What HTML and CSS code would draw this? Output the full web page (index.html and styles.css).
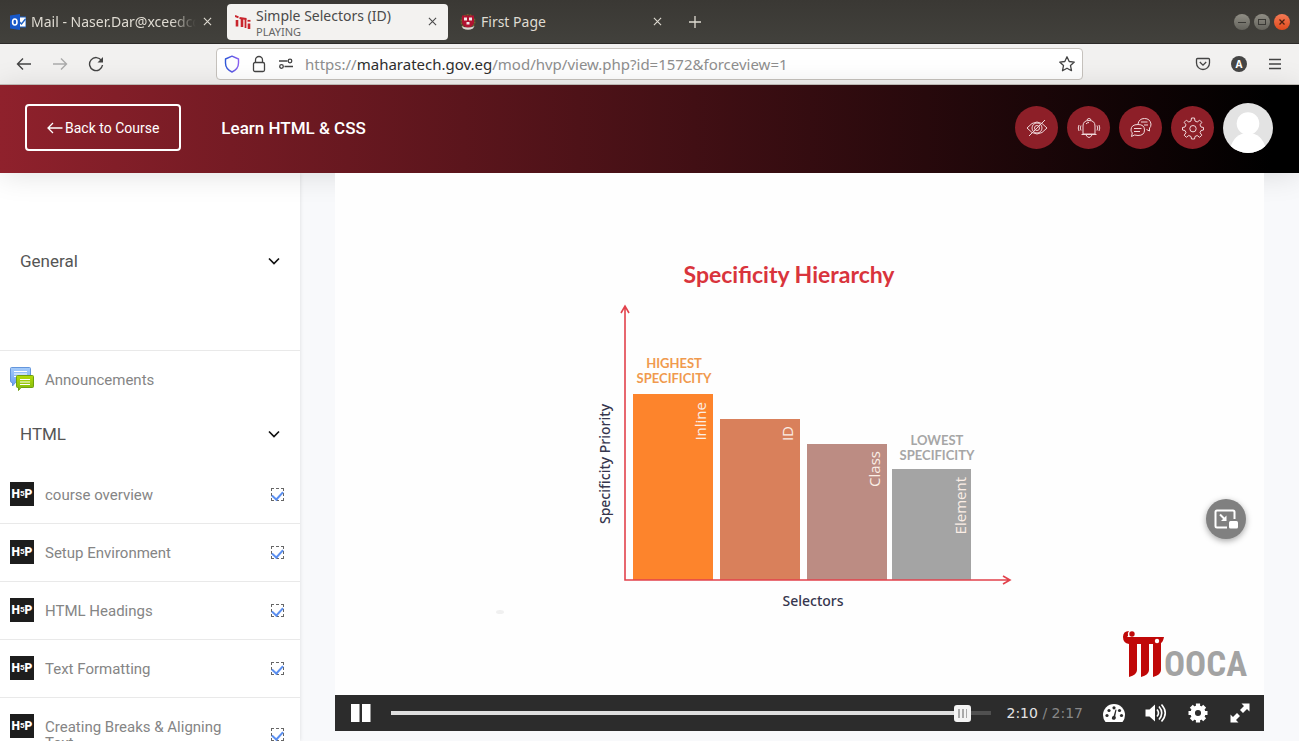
FILE: index.html
```html
<!DOCTYPE html>
<html lang="en">
<head>
<meta charset="utf-8">
<meta name="viewport" content="width=device-width, initial-scale=1">
<title>Simple Selectors (ID)</title>
<link rel="stylesheet" href="styles.css">
</head>
<body>
<svg class="defs" aria-hidden="true">
  <symbol id="close" viewBox="0 0 10 10"><path d="M1 1l8 8M9 1L1 9" fill="none" stroke="currentColor" stroke-width="1.2"/></symbol>
  <symbol id="chevron" viewBox="0 0 12 8"><path d="M1 1.500l5 5 5-5" fill="none" stroke="currentColor" stroke-width="1.700"/></symbol>
</svg>

<header class="titlebar">
  <nav class="tabs" aria-label="Tabs">
    <div class="tab">
      <svg class="favicon" viewBox="0 0 16 16"><rect x="9" y="3" width="7" height="10" fill="#fff" stroke="#1c60c4"/><path d="M9.500 8l2 2 4-5" fill="none" stroke="#1c60c4" stroke-width="1.500"/><path d="M0 1.500L10 0v16L0 14.500z" fill="#1858c8"/><ellipse cx="4.800" cy="8" rx="2.200" ry="3" fill="none" stroke="#fff" stroke-width="1.600"/></svg>
      <span class="tab-title fade">Mail - Naser.Dar@xceedcc</span>
      <button class="tab-close" aria-label="Close tab"><svg><use href="#close"/></svg></button>
    </div>
    <div class="tab active">
      <svg class="favicon" viewBox="0 0 16 16" fill="none" stroke="#c9252d"><path d="M2 6v6.500M7 4.500v8.500M14 9.500v5.500" stroke-width="2.600"/><path d="M0 1.800l3.500 1.500M4.500 4l7 1" stroke-width="2"/><path d="M10.500 5v9" stroke-width="1.800"/><path d="M12.500 6.800h3" stroke-width="1.800"/></svg>
      <span class="tab-title">Simple Selectors (ID)<small>PLAYING</small></span>
      <button class="tab-close" aria-label="Close tab"><svg><use href="#close"/></svg></button>
    </div>
    <div class="tab">
      <svg class="favicon" viewBox="0 0 16 16"><circle cx="8" cy="7.500" r="6.700" fill="none" stroke="#766328" stroke-width="1.600" stroke-dasharray="2 1"/><path d="M2 1.500h12v6.500q0 4-6 6-6-2-6-6z" fill="#b01330"/><path d="M4 3.500h3v3H4zM9 3.500h3v3H9zM6.500 8h3v2.500H6.500z" fill="#f2e8e8"/><path d="M1.500 12q6.500 3 13 0l-1.500 2.500q-5 2.500-10 0z" fill="#ded9d4"/></svg>
      <span class="tab-title">First Page</span>
      <button class="tab-close" aria-label="Close tab"><svg><use href="#close"/></svg></button>
    </div>
    <button class="new-tab" aria-label="New tab"><svg viewBox="0 0 12 12"><path d="M6 0v12M0 6h12" stroke="currentColor" stroke-width="1.300"/></svg></button>
  </nav>
  <div class="window-buttons">
    <button aria-label="Minimize"><svg viewBox="0 0 16 16"><path d="M4 8.500h8" stroke="#3a3935"/></svg></button>
    <button aria-label="Maximize"><svg viewBox="0 0 16 16"><rect x="4.500" y="5.500" width="7" height="5" fill="none" stroke="#3a3935"/></svg></button>
    <button class="quit" aria-label="Close window"><svg viewBox="0 0 16 16"><path d="M5.500 5.500l5 5M10.500 5.500l-5 5" stroke="#4a2010" stroke-width="1.300"/></svg></button>
  </div>
</header>

<div class="toolbar">
  <div class="nav-buttons">
    <button aria-label="Back"><svg viewBox="0 0 16 16"><path d="M15 8H1.500M7 2.500L1.500 8 7 13.500"/></svg></button>
    <button aria-label="Forward" disabled><svg viewBox="0 0 16 16"><path d="M1 8h13.500M9 2.500L14.500 8 9 13.500"/></svg></button>
    <button aria-label="Reload"><svg viewBox="0 0 16 16"><path d="M13.500 4.500A6.500 6.500 0 1 0 14.500 9"/><path d="M15 1v5.500H9.500z" fill="currentColor" stroke="none"/></svg></button>
  </div>
  <div class="address">
    <svg class="shield" viewBox="0 0 16 18"><defs><linearGradient id="sh"><stop stop-color="#2f58d8"/><stop offset="1" stop-color="#8a5ff0"/></linearGradient></defs><path d="M8 1.200L14.500 4v4q0 6-6.500 9Q1.500 14 1.500 8V4z" fill="none" stroke="url(#sh)" stroke-width="1.400" stroke-linejoin="round"/></svg>
    <svg class="line" viewBox="0 0 16 18"><rect x="2.500" y="7.500" width="11" height="9" rx="1.500"/><path d="M4.500 7.500V5a3.500 3.500 0 0 1 7 0v2.500"/></svg>
    <svg class="line" viewBox="0 0 16 18"><path d="M1 6h8.500M6.500 11.500H15"/><circle cx="12" cy="6" r="1.800"/><circle cx="3.500" cy="11.500" r="1.800"/></svg>
    <p class="url">https://<b>maharatech.gov.eg</b>/mod/hvp/view.php?id=1572&amp;forceview=1</p>
    <button aria-label="Bookmark"><svg class="line" viewBox="0 0 16 16"><path d="M8 .8l2.200 4.700 5.100.6-3.800 3.500 1 5.100L8 12.200l-4.500 2.500 1-5.100L.7 6.100l5.100-.6z" stroke-linejoin="round"/></svg></button>
  </div>
  <div class="tools">
    <button aria-label="Save to Pocket"><svg class="line" viewBox="0 0 16 16"><path d="M2.500 2.500h11q1 0 1 1V7a6.500 6.500 0 0 1-13 0V3.500q0-1 1-1z"/><path d="M4.800 6L8 9.200 11.200 6"/></svg></button>
    <button class="account" aria-label="Account">A</button>
    <button aria-label="Menu"><svg class="line" viewBox="0 0 16 16"><path d="M2 3.500h12M2 8h12M2 12.500h12"/></svg></button>
  </div>
</div>

<header class="course-header">
  <a class="back" href="#"><svg viewBox="0 0 16 12"><path d="M15.500 6H1M6 1L1 6l5 5" fill="none" stroke="currentColor" stroke-width="1.300"/></svg>Back to Course</a>
  <h1>Learn HTML &amp; CSS</h1>
  <div class="actions">
    <button aria-label="Focus mode"><svg viewBox="0 0 22 22"><path d="M1 11q10-12 20 0-10 12-20 0z"/><circle cx="11" cy="11" r="5"/><circle cx="11" cy="11" r="2.500"/><path d="M3 19L19 3"/></svg></button>
    <button aria-label="Notifications"><svg viewBox="0 0 22 22"><path d="M5 17V9q0-5.500 6-5.500T17 9v8zM3.500 17.500h15M9 3.500q0-2 2-2t2 2M8 18q3 5 6 0M8 7q1-1.500 3-1.500M3 8.500q-1.500 2.500 0 5M1 8q-1.500 3 0 6M19 8.500q1.500 2.500 0 5M21 8q1.500 3 0 6"/></svg></button>
    <button aria-label="Messages"><svg viewBox="0 0 22 22"><path d="M8 7Q9 1.500 14.500 1.500T21 7q0 3-1.500 4v3l-3-1.500"/><path d="M8 7.500q6.500 0 6.500 5.500T8 18.500l-3.500-.5-3 1.500.8-3.500Q1 14.500 1 13q0-5.500 7-5.500zM4 11.500h7.500M4 14.500h6M11 5h6.500M14 8h4"/></svg></button>
    <button aria-label="Settings"><svg viewBox="0 0 22 22"><path d="M9.500 1h3l.5 3 2.200 1 2.500-1.800 2.100 2.100L18 7.800l1 2.200 2.500.5v2.500l-2.500.5-1 2.200 1.800 2.500-2.100 2.100L15.200 18.500l-2.200 1-.5 2.500h-3L9 19.500l-2.200-1-2.500 1.800-2.100-2.100L4 15.700l-1-2.200L.5 13v-2.500L3 10l1-2.200-1.800-2.500 2.100-2.100L6.800 5 9 4z"/><circle cx="11" cy="11.700" r="3.200"/></svg></button>
    <a class="avatar" href="#" aria-label="Profile"><svg viewBox="0 0 50 50"><rect width="50" height="50" fill="#e3e3e3"/><circle cx="25" cy="20.500" r="11.300" fill="#fff"/><path d="M7 46q4-16 18-16t18 16v4H7z" fill="#fff"/></svg></a>
  </div>
</header>

<div class="layout">
  <aside class="sidebar">
    <button class="section general">General<svg><use href="#chevron"/></svg></button>
    <a class="activity forum" href="#">
      <svg class="tile" viewBox="0 0 24 24"><defs><linearGradient id="fb" y2="1" x2="0"><stop stop-color="#a6ccfa"/><stop offset="1" stop-color="#6a9df0"/></linearGradient><linearGradient id="fg" y2="1" x2="0"><stop stop-color="#b2dc0a"/><stop offset="1" stop-color="#82b80c"/></linearGradient></defs><path d="M1.500.5h18q1 0 1 1v13q0 1-1 1H5.500l-3 3.500v-3.500q-2 0-2-1v-13q0-1 1-1z" fill="url(#fb)" stroke="#6496dc"/><path d="M4 4.500h13M4 7h13M4 9.500h3" stroke="#fff"/><path d="M7.500 8.500h15q1 0 1 1v10q0 1-1 1H11l-2.500 3v-3H7.500q-1 0-1-1v-10q0-1 1-1z" fill="url(#fg)" stroke="#70a010"/><path d="M10 12.500h10M10 15h10M10 17.500h10" stroke="#fff"/></svg>
      <span class="name">Announcements</span>
    </a>
    <button class="section open">HTML<svg><use href="#chevron"/></svg></button>
    <ul class="lessons">
      <li class="activity"><span class="tile h5p">H<small>5</small>P</span><label for="l1">course overview</label><input type="checkbox" id="l1" checked></li>
      <li class="activity"><span class="tile h5p">H<small>5</small>P</span><label for="l2">Setup Environment</label><input type="checkbox" id="l2" checked></li>
      <li class="activity"><span class="tile h5p">H<small>5</small>P</span><label for="l3">HTML Headings</label><input type="checkbox" id="l3" checked></li>
      <li class="activity"><span class="tile h5p">H<small>5</small>P</span><label for="l4">Text Formatting</label><input type="checkbox" id="l4" checked></li>
      <li class="activity"><span class="tile h5p">H<small>5</small>P</span><label for="l5">Creating Breaks &amp; Aligning Text</label><input type="checkbox" id="l5" checked></li>
    </ul>
  </aside>

  <main class="content">
    <section class="player" aria-label="Video">
      <div class="stage">
        <svg class="slide" viewBox="0 0 929 522">
          <text class="slide-title" x="454" y="110">Specificity Hierarchy</text>
          <rect x="298" y="221" width="80" height="186" fill="#fd842c"/>
          <rect x="385" y="246" width="80" height="161" fill="#d9805b"/>
          <rect x="472" y="271" width="80" height="136" fill="#bc8c83"/>
          <rect x="557" y="296" width="79" height="111" fill="#a4a4a4"/>
          <path d="M290 134v273h384M286 140l4-7 4 7M668 403l7 4-7 4" fill="none" stroke="#e2424c" stroke-width="1.600"/>
          <g class="tag high"><text x="339" y="195">HIGHEST</text><text x="339" y="210">SPECIFICITY</text></g>
          <g class="tag low"><text x="602" y="272">LOWEST</text><text x="602" y="287">SPECIFICITY</text></g>
          <g class="bar-name"><text transform="translate(371 229) rotate(-90)">Inline</text><text transform="translate(458 253) rotate(-90)">ID</text><text transform="translate(545 278) rotate(-90)">Class</text><text transform="translate(631 304) rotate(-90)">Element</text></g>
          <text class="axis" transform="translate(275 291) rotate(-90)">Specificity Priority</text>
          <text class="axis" x="478" y="433">Selectors</text>
          <ellipse cx="165" cy="439" rx="4" ry="2" fill="#f0f0f0"/>
          <g fill="#c00808"><path d="M792 464h37q-1 5-3 6v27q0 5-8 7v-33h-4v26q0 5-8 7v-33h-4v26q0 5-8 7v-33q-6-1-6-7 0-6 6-6-2 2-1 5z"/><circle cx="797" cy="461" r="2.700"/></g>
          <circle cx="822" cy="468" r="2.200" fill="#fff"/>
          <text class="logo-name" x="829" y="503">OOCA</text>
        </svg>
        <button class="pip" aria-label="Picture in picture"><svg viewBox="0 0 24 20"><path d="M13 18.500H3q-1.500 0-1.500-1.500V3Q1.500 1.500 3 1.500h16q1.500 0 1.500 1.500v7" fill="none" stroke="#fff" stroke-width="2"/><path d="M6 5.500l5 5" stroke="#fff" stroke-width="2"/><path d="M12.500 6.500V12H7z" fill="#fff"/><rect x="15" y="12" width="9" height="7.500" rx="1.500" fill="#fff"/></svg></button>
      </div>
      <div class="controls">
        <button class="pause" aria-label="Pause"><svg viewBox="0 0 20 20"><path d="M0 1h8.500v18H0zM11 1h8.500v18H11z"/></svg></button>
        <input class="seek" type="range" min="0" max="1000" value="966" aria-label="Seek">
        <p class="time">2:10 <span>/ 2:17</span></p>
        <button aria-label="Playback rate"><svg viewBox="0 0 22 20"><path d="M2.500 19Q0 16 0 12A11 11 0 0 1 22 12q0 4-2.500 7z"/><g fill="#2c2c2c"><circle cx="4" cy="12.500" r="1.600"/><circle cx="6" cy="7.500" r="1.600"/><circle cx="11" cy="4.800" r="1.600"/><circle cx="16.500" cy="7.500" r="1.600"/><circle cx="18.500" cy="12.500" r="1.600"/><path d="M12.500 6.500l1 .3-1.200 6.200q1.500 2-.3 3.500-2.500 1-3.200-1-.2-2 1.900-2.800z"/></g></svg></button>
        <button aria-label="Mute"><svg viewBox="0 0 22 20"><path d="M.5 6.500h4l5.500-5v17l-5.500-5h-4z"/><path d="M12 6.500q3 3.500 0 7M14 3.500q5.500 6.500 0 13M16.500 1.500q7.500 8.500 0 17" fill="none" stroke="#fff" stroke-width="1.600"/></svg></button>
        <button aria-label="Quality"><svg viewBox="0 0 20 20"><g fill="none" stroke="#fff"><circle cx="10" cy="10" r="5.300" stroke-width="4.500"/><path d="M10 .5v3M10 16.500v3M.5 10h3M16.500 10h3M3.300 3.300l2 2M14.700 14.700l2 2M3.300 16.700l2-2M14.700 5.300l2-2" stroke-width="4.200"/></g></svg></button>
        <button aria-label="Fullscreen"><svg viewBox="0 0 20 20"><path d="M11.500.5h8v8L17 6l-4 4-3-3 4-4zM.5 11.500v8h8L6 17l4-4-3-3-4 4z"/></svg></button>
      </div>
    </section>
  </main>
</div>
</body>
</html>
```
FILE: styles.css
```css
* { box-sizing: border-box; }
body {
  margin: 0;
  height: 100vh;
  overflow: hidden;
  display: flex;
  flex-direction: column;
  background: #f8f9fb;
  font-family: Roboto, "Open Sans", sans-serif;
}
button { border: 0; padding: 0; margin: 0; background: none; color: inherit; font: inherit; }
p, h1, ul { margin: 0; padding: 0; }
svg { display: block; flex: none; }
.defs { position: absolute; width: 0; height: 0; }
.line { fill: none; stroke: currentColor; stroke-width: 1.3; }

/* window title bar and tabs */
.titlebar {
  flex: none;
  display: flex;
  justify-content: space-between;
  align-items: center;
  height: 44px;
  padding-right: 9px;
  background: linear-gradient(#3a3834, #42413c);
  border-bottom: 1px solid #2c2a28;
  color: #dfdbd2;
  font: 14px/20px "Noto Sans", sans-serif;
}
.tabs { display: flex; align-items: center; height: 100%; gap: 4px; }
.tab { display: flex; align-items: center; gap: 5px; width: 221px; height: 36px; padding: 0 10px 0 8px; border-radius: 4px; }
.tab:first-child { width: 223px; padding-left: 10px; }
.tab.active { background: #f3f2f0; color: #4a4a4a; }
.favicon { width: 16px; height: 16px; }
.tab-title { flex: 1; min-width: 0; overflow: hidden; white-space: nowrap; }
.tab-title small { display: block; font-size: 11px; line-height: 12px; color: #666; }
.fade { -webkit-mask-image: linear-gradient(90deg, #000 85%, transparent); mask-image: linear-gradient(90deg, #000 85%, transparent); }
.tab-close { width: 12px; height: 12px; display: grid; place-items: center; }
.tab-close svg { width: 9px; height: 9px; }
.new-tab { padding: 0 12px; }
.new-tab svg { width: 12px; height: 12px; }
.window-buttons { display: flex; gap: 4px; }
.window-buttons button { width: 16px; height: 16px; border-radius: 50%; background: linear-gradient(#908e85, #63625b); }
.window-buttons .quit { background: linear-gradient(#f47a55, #df4a1c); }

/* browser toolbar */
.toolbar {
  flex: none;
  display: grid;
  grid-template-columns: 216px 1fr 216px;
  align-items: center;
  height: 41px;
  background: #f2f1f0;
  border-bottom: 1px solid #c4c1bc;
  color: #444;
}
.nav-buttons { display: flex; gap: 20px; padding-left: 16px; }
.nav-buttons svg { width: 16px; height: 16px; fill: none; stroke: currentColor; stroke-width: 1.4; }
.nav-buttons :disabled { color: #aaa; }
.address {
  display: flex;
  align-items: center;
  gap: 11px;
  height: 32px;
  padding: 0 7px;
  background: #fff;
  border: 1px solid #c6c2bd;
  border-radius: 4px;
}
.address svg { width: 16px; height: 18px; }
.address button svg { height: 16px; }
.url { flex: 1; min-width: 0; font: 15px/20px "Noto Sans", sans-serif; color: #8e8e8e; }
.url b { font-weight: 400; color: #2e2e2e; }
.tools { display: flex; justify-content: flex-end; gap: 20px; padding-right: 16px; }
.tools svg { width: 16px; height: 16px; }
.tools .account { width: 16px; height: 16px; border-radius: 50%; background: #454545; color: #fff; font: 700 10px/16px "Noto Sans", sans-serif; }

/* course header */
.course-header {
  flex: none;
  position: relative;
  display: flex;
  align-items: center;
  height: 88px;
  padding: 0 26px 3px 25px;
  background: linear-gradient(90deg, #8f212c, #000 98%);
  box-shadow: 0 2px 30px rgba(0, 0, 0, .12);
  color: #fff;
}
.back {
  display: flex;
  align-items: center;
  gap: 2px;
  height: 47px;
  padding: 0 20px;
  border: 2px solid #fff;
  border-radius: 4px;
  color: #fff;
  font-size: 14px;
  text-decoration: none;
}
.back svg { width: 16px; height: 12px; }
.course-header h1 { margin-left: 40px; font-size: 17px; font-weight: 500; }
.actions { display: flex; align-items: center; gap: 9px; margin-left: auto; }
.actions button { display: grid; place-items: center; width: 43px; height: 43px; border-radius: 50%; background: #8d1f28; }
.actions button svg { width: 22px; height: 22px; overflow: visible; fill: none; stroke: #f0d8da; stroke-width: 1; }
.avatar { width: 50px; height: 50px; border-radius: 50%; overflow: hidden; }

/* sidebar */
.layout { flex: 1; min-height: 0; display: grid; grid-template-columns: 300px 1fr; }
.sidebar { background: #fff; overflow: hidden; box-shadow: 0 0 4px rgba(0, 0, 0, .12); }
.section {
  display: flex;
  justify-content: space-between;
  align-items: center;
  width: 100%;
  padding: 16px 20px;
  color: #555;
  font-size: 17px;
  line-height: 26px;
}
.section svg { width: 12px; height: 8px; color: #111; }
.section.general { padding: 75px 20px 76px; border-bottom: 1px solid #e9e9e9; }
.section.open { padding-bottom: 19px; }
.activity {
  display: flex;
  align-items: flex-start;
  gap: 11px;
  padding: 16px 16px 17px 10px;
  border-bottom: 1px solid #e9e9e9;
  color: #858585;
  font-size: 15px;
  line-height: 16px;
  text-decoration: none;
}
.activity.forum { border: 0; padding-bottom: 14px; }
.activity label, .activity .name { flex: 1; padding: 5px 24px 3px 0; }
.tile { flex: none; width: 24px; height: 24px; }
.h5p { display: flex; align-items: center; justify-content: center; background: #1d1d1d; color: #fff; font: 900 12px/24px Roboto, sans-serif; }
.h5p small { font-size: 8px; font-weight: 700; }
.lessons { list-style: none; }
.lessons input {
  appearance: none;
  align-self: center;
  display: grid;
  place-items: center;
  width: 13px;
  height: 13px;
  margin: 0;
  border: 1px dashed #666;
}
.lessons input::before {
  content: "";
  width: 5px;
  height: 9px;
  margin-bottom: 4px;
  border: solid #5b8ff0;
  border-width: 0 2px 2px 0;
  transform: rotate(42deg);
}

/* video player */
.content { padding: 0 35px; }
.stage { position: relative; background: #fefefe; }
.slide { width: 100%; height: auto; }
.slide text { text-anchor: middle; }
.slide .slide-title { font: 700 23px Lato, sans-serif; fill: #d9343c; }
.slide .tag { font: 700 13px Lato, sans-serif; }
.slide .high { fill: #f09a4e; }
.slide .low { fill: #a6a6a6; }
.slide .bar-name text { font: 500 15px "Open Sans", sans-serif; fill: #fbeee6; text-anchor: end; }
.slide .axis { font: 500 14px "Noto Sans", sans-serif; fill: #36364e; }
.slide .logo-name { font: 700 35px "Liberation Sans Narrow", "Roboto Condensed", Roboto, sans-serif; fill: #a3a3a3; text-anchor: start; }
.pip {
  position: absolute;
  right: 18px;
  bottom: 156px;
  display: grid;
  place-items: center;
  width: 40px;
  height: 40px;
  border-radius: 50%;
  background: #808080;
  box-shadow: 0 2px 6px rgba(0, 0, 0, .35);
}
.pip svg { width: 24px; height: 20px; }
.controls { display: flex; align-items: center; gap: 20px; height: 36px; padding: 0 13px 0 16px; background: #2c2c2c; }
.controls svg { width: 22px; height: 20px; fill: #fff; }
.controls .pause svg { width: 20px; }
.seek {
  appearance: none;
  flex: 1;
  min-width: 0;
  height: 4px;
  margin: 0;
  background: linear-gradient(90deg, #dedede 95%, #505050 95%);
}
.seek::-webkit-slider-thumb {
  appearance: none;
  width: 17px;
  height: 17px;
  border: 4px solid #f4f4f4;
  border-radius: 3px;
  background: repeating-linear-gradient(90deg, #aaa 0 2px, #f4f4f4 2px 4px);
}
.time { margin-left: -4px; white-space: nowrap; font: 14px/20px "DejaVu Sans", sans-serif; color: #e4e4e4; }
.time span { color: #888; }
```
